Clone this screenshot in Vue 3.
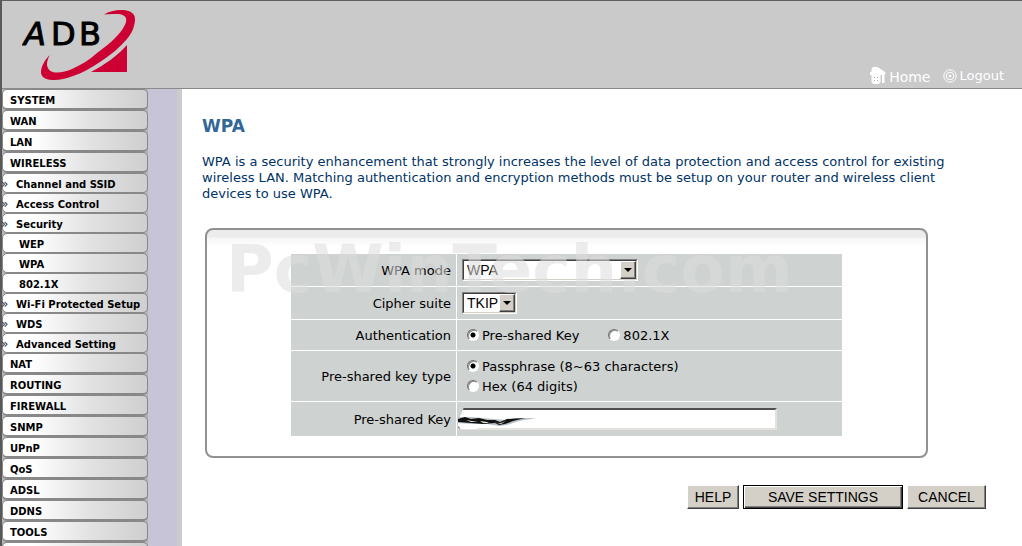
<script setup>
import { ref } from 'vue'

const menu = [
  { label: 'SYSTEM', level: 0 },
  { label: 'WAN', level: 0 },
  { label: 'LAN', level: 0 },
  { label: 'WIRELESS', level: 0 },
  { label: 'Channel and SSID', level: 1 },
  { label: 'Access Control', level: 1 },
  { label: 'Security', level: 1 },
  { label: 'WEP', level: 2 },
  { label: 'WPA', level: 2 },
  { label: '802.1X', level: 2 },
  { label: 'Wi-Fi Protected Setup', level: 1 },
  { label: 'WDS', level: 1 },
  { label: 'Advanced Setting', level: 1 },
  { label: 'NAT', level: 0 },
  { label: 'ROUTING', level: 0 },
  { label: 'FIREWALL', level: 0 },
  { label: 'SNMP', level: 0 },
  { label: 'UPnP', level: 0 },
  { label: 'QoS', level: 0 },
  { label: 'ADSL', level: 0 },
  { label: 'DDNS', level: 0 },
  { label: 'TOOLS', level: 0 },
]

const mode = ref('WPA')
const cipher = ref('TKIP')
const auth = ref('psk')
const keyType = ref('passphrase')
const key = ref('')
</script>

<template>
  <div class="page">
    <header class="top">
      <svg class="logo" viewBox="22 7 120 76" role="img" aria-label="ADB">
        <g class="logo-text">
          <text x="24" y="45" font-style="italic">A</text>
          <text x="51" y="45">D</text>
          <text x="79" y="45">B</text>
        </g>
        <path
          class="swoosh"
          d="M104 14.500C109 11 117 9.500 123 10C131 10.500 135.500 14 135 20C134.500 27 132 33 127 39C120 47 111 55 100 62C91 68 82 73 73 76C65 79 58 80.500 52 80C45 79.500 41 77 41 72C41 67 45 59 50 55C47 60 46.500 64 47.500 67C49 71 52 72.500 57 72.500C62 72.500 67 71 72 69C81 65 89 60 97 53C107 46 116 38 122 30C126 24 127.500 20 125 16.500C123 13.500 115 13.500 104 14.500Z"
        />
        <path class="swoosh" d="M91 72C106 64 117 56 127 45V72Z" />
      </svg>
      <nav class="top-links" aria-label="Session">
        <a href="#home" class="home">
          <svg class="icon-home" viewBox="0 0 16 17" aria-hidden="true">
            <path d="M3 0H7L9 1L12 3L15 5L16 7H14.500V16H12V8H10.500V15L9 17H3L1.500 15V8H0V5H1.500V2Z" />
            <path class="window" d="M4 10h1v1H4zM7 10h1v1H7zM4 13h1v1H4zM7 13h1v1H7z" />
          </svg>
          <span>Home</span>
        </a>
        <a href="#logout" class="logout">
          <svg class="icon-logout" viewBox="0 0 14 14" aria-hidden="true">
            <circle cx="7" cy="7" r="6.200" />
            <circle cx="7" cy="7" r="3.800" />
            <circle class="dot" cx="7" cy="7" r="1" />
          </svg>
          <span>Logout</span>
        </a>
      </nav>
    </header>

    <div class="body">
      <aside class="side">
        <ul class="menu">
          <li v-for="item in menu" :key="item.label" :class="['level-' + item.level]">
            <a href="#menu"><span v-if="item.level === 1" class="mark">»</span>{{ item.label }}</a>
          </li>
          <li class="level-0"><a href="#menu" aria-label="More"></a></li>
        </ul>
      </aside>

      <main class="main">
        <h1>WPA</h1>
        <p class="intro">
          WPA is a security enhancement that strongly increases the level of data protection and
          access control for existing wireless LAN. Matching authentication and encryption methods
          must be setup on your router and wireless client devices to use WPA.
        </p>

        <form @submit.prevent>
          <div class="panel">
            <table>
              <tbody>
                <tr class="row-mode">
                  <th scope="row"><label for="mode">WPA mode</label></th>
                  <td>
                    <span class="select wide">
                      <select id="mode" v-model="mode"><option>WPA</option></select>
                      <span class="arrow"></span>
                    </span>
                  </td>
                </tr>
                <tr class="row-cipher">
                  <th scope="row"><label for="cipher">Cipher suite</label></th>
                  <td>
                    <span class="select">
                      <select id="cipher" v-model="cipher"><option>TKIP</option></select>
                      <span class="arrow"></span>
                    </span>
                  </td>
                </tr>
                <tr class="row-auth">
                  <th scope="row">Authentication</th>
                  <td>
                    <div class="radios">
                      <label><input v-model="auth" type="radio" name="auth" value="psk" />Pre-shared Key</label>
                      <label><input v-model="auth" type="radio" name="auth" value="8021x" />802.1X</label>
                    </div>
                  </td>
                </tr>
                <tr class="row-type">
                  <th scope="row">Pre-shared key type</th>
                  <td>
                    <div class="radios stacked">
                      <label><input v-model="keyType" type="radio" name="type" value="passphrase" />Passphrase (8~63 characters)</label>
                      <label><input v-model="keyType" type="radio" name="type" value="hex" />Hex (64 digits)</label>
                    </div>
                  </td>
                </tr>
                <tr class="row-key">
                  <th scope="row"><label for="key">Pre-shared Key</label></th>
                  <td>
                    <div class="key-field">
                      <input id="key" v-model="key" type="text" />
                      <svg class="smudge" viewBox="0 0 90 26" aria-hidden="true">
                        <path class="cover" d="M0 0H7L4 8L1 12V20L5 24H0Z" />
                        <path class="paper" d="M7 5L3 9L1 13L1 19L4 22H20L24 4Z" />
                        <path class="shade" d="M1 10L14 10L25 11L38 12L48 13L58 11L80 11L62 14L50 18L42 19L30 17L14 17L1 16Z" />
                        <path class="ink" d="M1 12L8 10L14 12L22 11L30 13L38 13L43 15L50 12L68 11L56 14L48 17L42 18L38 16L26 17L14 16L1 15Z" />
                        <path class="gap" d="M9 13L15 14L21 15L14 15ZM23 14L30 15L32 16L26 16ZM36 15L41 16L44 16L49 14L44 17Z" />
                      </svg>
                    </div>
                  </td>
                </tr>
              </tbody>
            </table>
            <div class="watermark">PcWinTech.com</div>
          </div>

          <div class="actions">
            <button type="button" class="help">HELP</button>
            <button type="submit" class="save">SAVE SETTINGS</button>
            <button type="reset" class="cancel">CANCEL</button>
          </div>
        </form>
      </main>
    </div>
  </div>
</template>

<style>
body {
  margin: 0;
  background: #fff;
}
</style>

<style scoped>
.page {
  box-sizing: border-box;
  height: 100vh;
  overflow: hidden;
  display: flex;
  flex-direction: column;
  border-top: 1px solid #606060;
  border-left: 2px solid #585858;
  font-family: "DejaVu Sans", Verdana, sans-serif;
  font-size: 13px;
  color: #000;
}
.top {
  flex: none;
  display: flex;
  justify-content: space-between;
  align-items: flex-end;
  box-sizing: border-box;
  height: 88px;
  padding: 0 18px 0 20px;
  background: #cacaca;
  border-bottom: 1px solid #8a8a8a;
}
.logo {
  width: 120px;
  height: 76px;
  margin-bottom: 5px;
}
.logo-text {
  font-size: 32px;
  fill: #000;
  stroke: #000;
  stroke-width: 1;
}
.swoosh {
  fill: #cd0033;
}
.top-links {
  display: flex;
  align-items: center;
  gap: 13px;
  padding-bottom: 2px;
}
.top-links a {
  display: flex;
  align-items: center;
  color: #fff;
  text-decoration: none;
  line-height: 18px;
}
.home {
  gap: 3px;
  font-size: 14px;
  padding-top: 2px;
}
.logout {
  gap: 2px;
  font-size: 13px;
}
.icon-home {
  width: 16px;
  height: 17px;
  margin-bottom: 2px;
  fill: #fff;
}
.window {
  fill: #aaa;
}
.icon-logout {
  width: 14px;
  height: 14px;
  fill: none;
  stroke: #fff;
  stroke-width: 1;
}
.dot {
  fill: #fff;
}
.body {
  flex: 1;
  min-height: 0;
  display: flex;
}
.side {
  flex: none;
  box-sizing: border-box;
  width: 180px;
  background: #c6c4d6;
  border-right: 5px solid #ccc;
}
.menu {
  width: 146px;
  margin: 0;
  padding: 0;
  list-style: none;
  background: #b4b4b4;
}
.menu a {
  display: block;
  box-sizing: border-box;
  height: 20px;
  border: 1px solid #888;
  border-width: 1px 1px 1px 1px;
  border-radius: 5px;
  background: linear-gradient(to right, #fff 20%, #e2e2e2 60%, #cfcfcf);
  color: #000;
  font-size: 10px;
  font-weight: bold;
  line-height: 22px;
  text-decoration: none;
  white-space: nowrap;
}
.menu .level-0 a {
  height: 21px;
  padding-left: 7px;
  border-bottom-width: 2px;
}
.menu .level-2 a {
  padding-left: 16px;
}
.mark {
  display: inline-block;
  width: 13px;
  font-size: 12px;
  font-weight: normal;
  line-height: 16px;
  text-indent: -2px;
  color: #234;
}
.main {
  flex: 1;
  min-width: 0;
  padding: 26px 36px 0 20px;
}
h1 {
  margin: 0;
  color: #336699;
  font-size: 17px;
  line-height: 22px;
}
.intro {
  margin: 17px 0 0;
  color: #003366;
  line-height: 16px;
}
.panel {
  position: relative;
  margin: 26px 58px 0 3px;
  padding: 24px 84px 20px;
  border: 2px solid #919191;
  border-radius: 8px;
  background: linear-gradient(#ececec 0, #ececec 7px, #f6f6f6 8px, #fff 17px);
}
table {
  width: 100%;
  border-collapse: separate;
  border-spacing: 0;
}
th,
td {
  box-sizing: border-box;
  padding: 0;
  background: #ced2d1;
  vertical-align: middle;
}
th {
  width: 165px;
  padding-right: 5px;
  font-weight: normal;
  text-align: right;
}
td {
  border-left: 1px solid #fff;
  padding-left: 5px;
}
tr + tr th,
tr + tr td {
  border-top: 1px solid #fff;
}
.row-mode td {
  height: 32px;
}
.row-cipher td {
  height: 33px;
}
.row-auth td {
  height: 31px;
}
.row-type td {
  height: 51px;
}
.row-key td {
  height: 35px;
  padding-left: 1px;
}
.select {
  position: relative;
  display: block;
  box-sizing: border-box;
  width: 55px;
  height: 22px;
  border: 1px solid;
  border-color: #808080 #fff #fff #808080;
}
.select.wide {
  width: 176px;
}
.select select {
  display: block;
  box-sizing: border-box;
  width: 100%;
  height: 20px;
  margin: 0;
  padding: 0 0 0 3px;
  appearance: none;
  border: 1px solid;
  border-color: #404040 #d4d0c8 #d4d0c8 #404040;
  border-radius: 0;
  background: #fff;
  color: #000;
  font-family: "Liberation Sans", Arial, sans-serif;
  font-size: 14px;
}
.arrow {
  position: absolute;
  top: 1px;
  right: 1px;
  box-sizing: border-box;
  width: 16px;
  height: 18px;
  border: 1px solid;
  border-color: #fff #404040 #404040 #fff;
  box-shadow: inset -1px -1px #808080;
  background: #d4d0c8;
  pointer-events: none;
}
.arrow::after {
  content: "";
  position: absolute;
  left: 3px;
  top: 6px;
  border: 4px solid transparent;
  border-top-color: #000;
  border-bottom: 0;
}
.radios {
  display: flex;
  gap: 29px;
  padding: 1px 0 0 5px;
}
.radios.stacked {
  flex-direction: column;
  gap: 0;
}
.radios label {
  display: flex;
  align-items: center;
  gap: 3px;
  line-height: 20px;
}
.radios input {
  appearance: none;
  box-sizing: border-box;
  width: 12px;
  height: 12px;
  margin: 0 0 2px;
  border: 1px solid;
  border-color: #707070 #fff #fff #707070;
  border-radius: 50%;
  background: #fff;
  box-shadow: inset 1px 1px #909090;
}
.radios input:checked {
  background: radial-gradient(circle at center, #000 2px, #fff 3px);
}
.key-field {
  position: relative;
  padding-bottom: 1px;
}
.key-field input {
  display: block;
  box-sizing: border-box;
  width: 319px;
  height: 22px;
  margin: 0;
  padding: 0 4px;
  border: 2px solid;
  border-color: #505050 #e4e2dc #e4e2dc #505050;
  background: #fff;
  font-family: "Liberation Sans", Arial, sans-serif;
  font-size: 14px;
}
.smudge {
  position: absolute;
  left: -1px;
  top: -1px;
  width: 90px;
  height: 26px;
}
.cover {
  fill: #ced2d1;
}
.paper {
  fill: #fff;
}
.shade {
  fill: #b9c2c8;
}
.ink {
  fill: #111;
}
.gap {
  fill: #e8e0d4;
}
.watermark {
  position: absolute;
  left: 19px;
  top: 2px;
  color: rgba(220, 220, 220, 0.55);
  font-size: 65px;
  font-weight: bold;
  line-height: 76px;
  pointer-events: none;
}
.actions {
  display: flex;
  justify-content: flex-end;
  gap: 4px;
  margin-top: 27px;
}
.actions button {
  box-sizing: border-box;
  height: 24px;
  padding: 0;
  border: 1px solid;
  border-color: #fff #404040 #404040 #fff;
  border-radius: 0;
  box-shadow: inset -1px -1px #808080;
  background: #d4d0c8;
  color: #000;
  font-family: "Liberation Sans", Arial, sans-serif;
  font-size: 14px;
}
.actions .help {
  width: 52px;
}
.actions .save {
  width: 160px;
  border-color: #000;
  box-shadow: inset 1px 1px #fff, inset -1px -1px #404040, inset -2px -2px #808080;
}
.actions .cancel {
  width: 79px;
}
</style>
